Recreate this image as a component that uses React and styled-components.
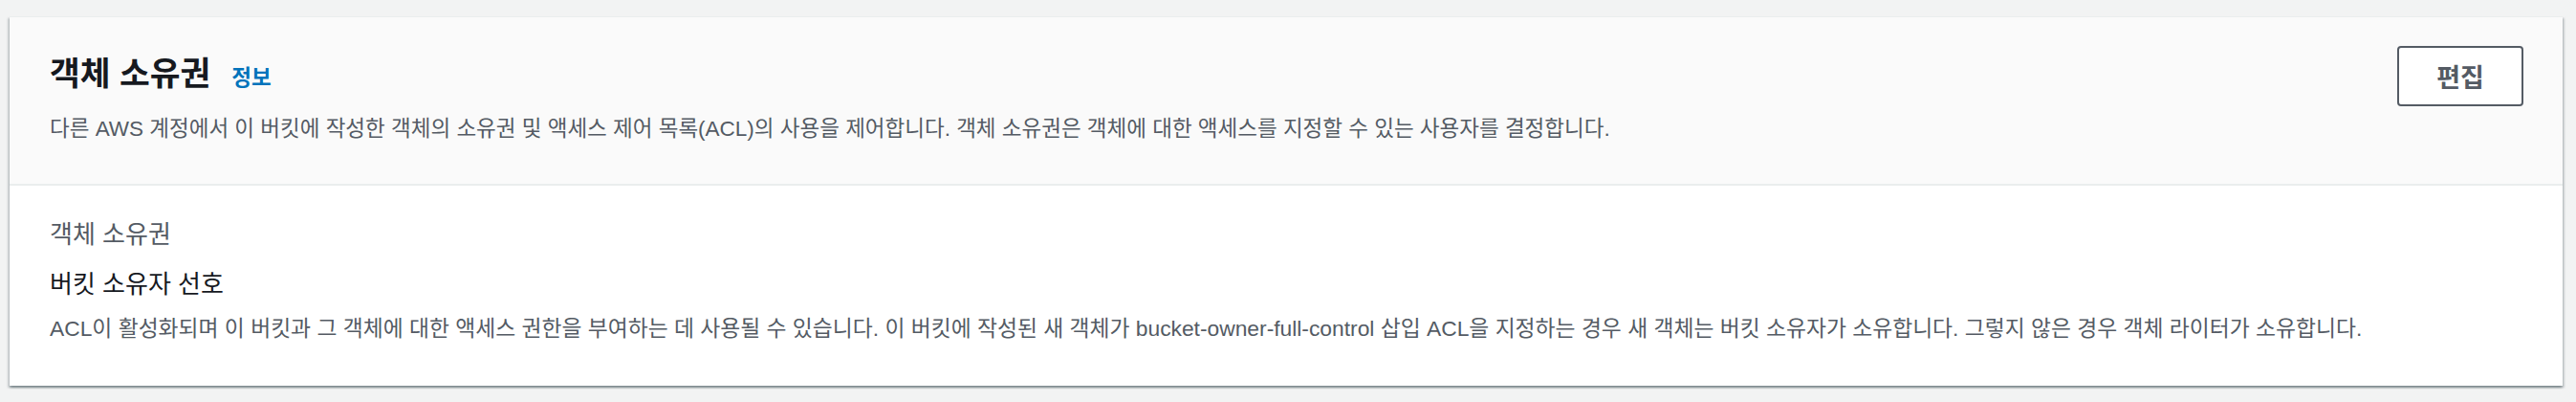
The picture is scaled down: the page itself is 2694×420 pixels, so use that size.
import React from 'react';
import styled, { createGlobalStyle } from 'styled-components';

const GlobalStyle = createGlobalStyle`
    html, body {
        margin: 0;
        padding: 0;
        background: #f2f3f3;
    }
    body {
        font-family: "Liberation Sans", "Noto Sans CJK KR", sans-serif;
        color: #16191f;
    }
`;

const Page = styled.div`
    padding: 17px 14px 16px 10px;
`;

const Card = styled.section`
    background: #ffffff;
    border-top: 1px solid #eaeded;
    box-shadow: 0 2px 2px 0 rgba(0, 28, 36, 0.3),
        2px 2px 2px 0 rgba(0, 28, 36, 0.15),
        -2px 2px 2px 0 rgba(0, 28, 36, 0.15);
`;

const CardHeader = styled.header`
    background: #fafafa;
    border-bottom: 2px solid #eaeded;
    padding: 30px 41px 41px 42px;
`;

const HeaderTop = styled.div`
    display: flex;
    align-items: flex-start;
    justify-content: space-between;
`;

const TitleWrap = styled.div`
    display: flex;
    align-items: baseline;
    gap: 22px;
    margin-top: 8px;
`;

const Title = styled.h2`
    margin: 0;
    font-size: 34.5px;
    line-height: 42px;
    font-weight: 700;
    color: #16191f;
`;

const InfoLink = styled.a`
    font-size: 22.5px;
    font-weight: 700;
    color: #0073bb;
    text-decoration: none;
    cursor: pointer;
`;

const Button = styled.button`
    box-sizing: border-box;
    width: 132px;
    height: 63px;
    border: 2px solid #545b64;
    border-radius: 4px;
    background: #ffffff;
    color: #545b64;
    font-family: inherit;
    font-size: 27px;
    font-weight: 700;
    cursor: pointer;
`;

const Description = styled.p`
    margin: 8px 0 0;
    font-size: 22.5px;
    line-height: 32px;
    color: #545b64;
`;

const CardBody = styled.div`
    padding: 33px 42px 44px;
`;

const Label = styled.div`
    font-size: 26px;
    line-height: 36px;
    color: ${({ $muted }) => ($muted ? '#545b64' : '#16191f')};
    margin-top: ${({ $gap }) => $gap || 0}px;
`;

const BodyDescription = styled.p`
    margin: 12px 0 0;
    font-size: 22.8px;
    line-height: 32px;
    color: #545b64;
`;

export default function App() {
    return (
        <>
            <GlobalStyle />
            <Page>
                <Card>
                    <CardHeader>
                        <HeaderTop>
                            <TitleWrap>
                                <Title>객체 소유권</Title>
                                <InfoLink>정보</InfoLink>
                            </TitleWrap>
                            <Button>편집</Button>
                        </HeaderTop>
                        <Description>
                            다른 AWS 계정에서 이 버킷에 작성한 객체의 소유권 및 액세스 제어 목록(ACL)의 사용을 제어합니다. 객체 소유권은 객체에 대한 액세스를 지정할 수 있는 사용자를 결정합니다.
                        </Description>
                    </CardHeader>
                    <CardBody>
                        <Label $muted>객체 소유권</Label>
                        <Label $gap={16}>버킷 소유자 선호</Label>
                        <BodyDescription>
                            ACL이 활성화되며 이 버킷과 그 객체에 대한 액세스 권한을 부여하는 데 사용될 수 있습니다. 이 버킷에 작성된 새 객체가 bucket-owner-full-control 삽입 ACL을 지정하는 경우 새 객체는 버킷 소유자가 소유합니다. 그렇지 않은 경우 객체 라이터가 소유합니다.
                        </BodyDescription>
                    </CardBody>
                </Card>
            </Page>
        </>
    );
}
